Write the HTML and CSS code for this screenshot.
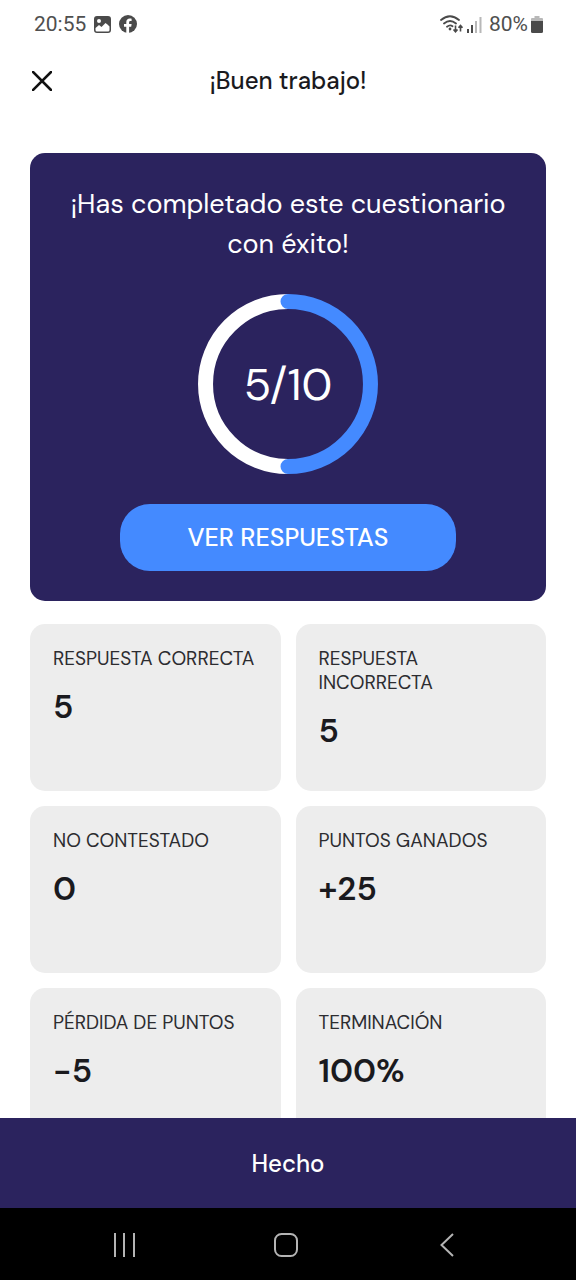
FILE: index.html
```html
<!DOCTYPE html>
<html lang="es">
<head>
<meta charset="utf-8">
<meta name="viewport" content="width=device-width, initial-scale=1">
<title>¡Buen trabajo!</title>
<link rel="stylesheet" href="styles.css">
</head>
<body>
<div class="screen">
  <div class="status-bar">
    <div class="status-group">
      <span>20:55</span>
      <svg viewBox="0 0 17 17" width="17" height="17" aria-hidden="true">
        <path fill="#4a4a4a" fill-rule="evenodd" d="M3 0h11a3 3 0 0 1 3 3v11a3 3 0 0 1-3 3H3a3 3 0 0 1-3-3V3a3 3 0 0 1 3-3ZM1.500 12V14q0 1.500 1.500 1.500h11q1.500 0 1.500-1.500V10.500L13.500 8.500 11.500 7 7.500 11 5 9ZM5 3a2 2 0 1 0 0 4 2 2 0 0 0 0-4Z"/>
      </svg>
      <svg viewBox="0 0 18 18" width="18" height="18" aria-hidden="true">
        <circle cx="9" cy="9" r="9" fill="#4a4a4a"/>
        <path fill="#fff" d="M7.300 18v-6.300H5V9h2.300V7.100C7.300 4.700 8.700 3.500 10.800 3.500c.9 0 1.800.2 1.800.2v2.200h-1.100c-1 0-1.400.6-1.400 1.300V9h2.500l-.4 2.700H10.100V18Z"/>
      </svg>
    </div>
    <div class="status-group status-right">
      <svg viewBox="0 0 24 18" width="24" height="18" aria-hidden="true">
        <g fill="none" stroke="#4a4a4a" stroke-width="1.800" stroke-linecap="round">
          <path d="M1 5Q10-2.500 19 5M4 8.500Q10 3.500 16 8.500M7 11.700Q10 9.300 12.500 11.200"/>
        </g>
        <circle cx="10" cy="14" r="1.400" fill="#4a4a4a"/>
        <path d="M15.500 10.500v6.500M13.500 14.500l2 2.300 2-2.300M20.500 16.500V10.500M18.500 12.800l2-2.300 2 2.300" fill="none" stroke="#4a4a4a" stroke-width="1.600"/>
      </svg>
      <svg viewBox="0 0 15 17" width="15" height="17" aria-hidden="true">
        <path fill="#4a4a4a" d="M0 13h2v4H0zM4 9h2v8H4z"/>
        <path fill="#b8b8b8" d="M8 5h2v12H8zM12.500 1h2v16h-2z"/>
      </svg>
      <span class="battery-level">80%</span>
      <svg viewBox="0 0 12 17" width="12" height="17" aria-hidden="true">
        <path fill="#b8b8b8" d="M3.500 0h5v2H11q1 0 1 1v3H0V3q0-1 1-1h2.500z"/>
        <path fill="#4a4a4a" d="M0 5h12v10.500q0 1.500-1.500 1.500h-9Q0 17 0 15.500z"/>
      </svg>
    </div>
  </div>

  <header class="header">
    <button class="close" type="button" aria-label="Cerrar">
      <svg viewBox="0 0 20 20" width="20" height="20" aria-hidden="true">
        <path d="M1 1l18 18M19 1L1 19" stroke="#111" stroke-width="2.600" stroke-linecap="square"/>
      </svg>
    </button>
    <h1 class="title">¡Buen trabajo!</h1>
  </header>

  <main class="content">
    <section class="result">
      <p class="message">¡Has completado este cuestionario con éxito!</p>
      <div class="score">
        <svg class="ring" viewBox="0 0 180 180" aria-hidden="true">
          <path d="M90 7.500a82.500 82.500 0 0 0 0 165" fill="none" stroke="#fff" stroke-width="15"/>
          <path d="M90 7.500a82.500 82.500 0 0 1 0 165" fill="none" stroke="#448aff" stroke-width="15" stroke-linecap="round"/>
        </svg>
        <span class="score-value">5/10</span>
      </div>
      <button class="answers" type="button">VER RESPUESTAS</button>
    </section>

    <dl class="stats">
      <div class="stat"><dt>RESPUESTA CORRECTA</dt><dd>5</dd></div>
      <div class="stat"><dt>RESPUESTA INCORRECTA</dt><dd>5</dd></div>
      <div class="stat"><dt>NO CONTESTADO</dt><dd>0</dd></div>
      <div class="stat"><dt>PUNTOS GANADOS</dt><dd>+25</dd></div>
      <div class="stat"><dt>PÉRDIDA DE PUNTOS</dt><dd>−5</dd></div>
      <div class="stat"><dt>TERMINACIÓN</dt><dd>100%</dd></div>
    </dl>
  </main>

  <button class="done" type="button">Hecho</button>

  <nav class="system-nav" aria-label="Sistema">
    <button type="button" aria-label="Recientes">
      <svg viewBox="0 0 24 24" width="24" height="24" aria-hidden="true"><path d="M3 0v24M12 0v24M22 0v24" stroke="#b4b4b4" stroke-width="2"/></svg>
    </button>
    <button type="button" aria-label="Inicio">
      <svg viewBox="0 0 24 24" width="24" height="24" aria-hidden="true"><rect x="1" y="1" width="22" height="22" rx="6.500" fill="none" stroke="#b4b4b4" stroke-width="2"/></svg>
    </button>
    <button type="button" aria-label="Atrás">
      <svg viewBox="0 0 24 24" width="24" height="24" aria-hidden="true"><path d="M18 1L6.500 12 18 23" fill="none" stroke="#b4b4b4" stroke-width="2"/></svg>
    </button>
  </nav>
</div>
</body>
</html>
```

FILE: styles.css
```css
* {
  box-sizing: border-box;
}

body {
  margin: 0;
  background: #fff;
  color: #1a1a1e;
  font-family: "DM Sans", Inter, "Liberation Sans", sans-serif;
}

button {
  border: 0;
  padding: 0;
  background: none;
  color: inherit;
  font: inherit;
  cursor: pointer;
}

svg {
  display: block;
}

.screen {
  display: flex;
  flex-direction: column;
  height: 100vh;
}

.status-bar {
  display: flex;
  justify-content: space-between;
  align-items: center;
  flex: none;
  height: 48px;
  padding: 0 33px 0 34px;
  color: #4f4f4f;
  font-family: Roboto, sans-serif;
  font-size: 21px;
}

.status-group {
  display: flex;
  align-items: center;
  gap: 8px;
}

.status-right {
  gap: 3px;
}

.battery-level {
  margin-left: 4px;
}

.header {
  display: grid;
  grid-template-columns: 24px 1fr 24px;
  align-items: center;
  flex: none;
  height: 66px;
  padding: 0 30px;
}

.close {
  display: grid;
  place-items: center;
  height: 24px;
}

.title {
  margin: 0;
  font-size: 24px;
  font-weight: 500;
  line-height: 32px;
  text-align: center;
}

.content {
  flex: 1;
  min-height: 0;
  margin-top: 9px;
  padding: 30px 30px 0;
  overflow-y: auto;
  scrollbar-width: none;
}

.result {
  display: flex;
  flex-direction: column;
  align-items: center;
  gap: 30px;
  padding: 31px 30px 30px;
  border-radius: 15px;
  background: #2b235e;
  color: #fff;
}

.message {
  margin: 0;
  font-size: 27px;
  line-height: 40px;
  text-align: center;
}

.score {
  display: grid;
  place-items: center;
  width: 180px;
  height: 180px;
}

.ring,
.score-value {
  grid-area: 1 / 1;
}

.score-value {
  font-size: 45px;
  font-weight: 400;
}

.answers {
  align-self: stretch;
  height: 67px;
  margin: 0 60px;
  border-radius: 30px;
  background: #448aff;
  font-size: 25px;
  font-weight: 500;
}

.stats {
  display: grid;
  grid-template-columns: 1fr 1fr;
  gap: 15px;
  margin: 23px 0 30px;
}

.stat {
  min-height: 167px;
  padding: 23px;
  border-radius: 15px;
  background: #ededed;
}

.stat dt {
  color: #2c2c30;
  font-size: 19px;
  line-height: 24px;
}

.stat dd {
  margin: 12px 0 0;
  font-size: 33px;
  font-weight: 600;
  line-height: 48px;
}

.done {
  flex: none;
  height: 90px;
  background: #2b235e;
  color: #fff;
  font-size: 24px;
  font-weight: 500;
}

.system-nav {
  display: flex;
  justify-content: space-between;
  align-items: center;
  flex: none;
  height: 72px;
  padding: 2px 117px 0 112px;
  background: #000;
}
```
